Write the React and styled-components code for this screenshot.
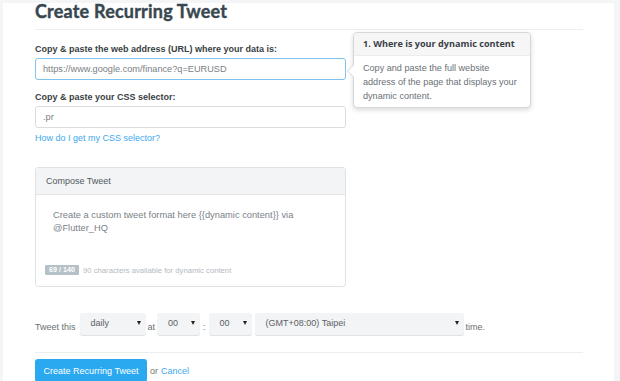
import React from "react";
import styled, { createGlobalStyle } from "styled-components";

const GlobalStyle = createGlobalStyle`
  html, body {
    margin: 0;
    padding: 0;
    background: #f3f5f7;
    font-family: "Liberation Sans", Arial, sans-serif;
    overflow: hidden;
  }
`;

const Panel = styled.div`
  margin: 3px 0 0 3px;
  width: 611px;
  height: 378px;
  background: #fff;
  padding: 0 31px 0 32px;
  box-sizing: border-box;
`;

const Title = styled.h1`
  margin: 0;
  font-family: Lato, "Open Sans", sans-serif;
  font-weight: 700;
  font-size: 18px;
  line-height: 17px;
  color: #38474f;
  letter-spacing: 0.2px;
  -webkit-text-stroke: 0.4px #38474f;
  padding-bottom: 9px;
  border-bottom: 1px solid #eceeef;
`;

const Form = styled.div`
  width: 311px;
  padding-top: 13px;
`;

const Field = styled.div`
  position: relative;
  margin-bottom: ${(p) => p.mb || 0}px;
`;

const Label = styled.div`
  font-size: 9px;
  font-weight: 700;
  color: #3a3f44;
  line-height: 12px;
  margin-bottom: 3px;
`;

const Input = styled.div`
  height: 22px;
  box-sizing: border-box;
  border: 1px solid ${(p) => (p.focused ? "#7cc3ee" : "#d9dde0")};
  border-radius: 3px;
  padding: 0 7px;
  font-size: 9.2px;
  line-height: 20px;
  color: #7a7f84;
`;

const Link = styled.a`
  display: ${(p) => (p.inline ? "inline" : "block")};
  margin-top: ${(p) => (p.inline ? 0 : 4)}px;
  color: #3ea8ee;
  font-size: 9px;
  text-decoration: none;
  line-height: 12px;
`;

const Popover = styled.div`
  position: absolute;
  left: 318px;
  top: -11px;
  width: 178px;
  background: #fff;
  border: 1px solid #d4d8db;
  border-radius: 4px;
  box-shadow: 0 2px 5px rgba(0, 0, 0, 0.15);
  box-sizing: border-box;
  z-index: 2;
  &::before,
  &::after {
    content: "";
    position: absolute;
    border-style: solid;
    border-color: transparent;
  }
  &::before {
    left: -7px;
    top: 31px;
    border-width: 7px 7px 7px 0;
    border-right-color: #cfd3d6;
  }
  &::after {
    left: -6px;
    top: 32px;
    border-width: 6px 6px 6px 0;
    border-right-color: #fff;
  }
`;

const PopTitle = styled.div`
  background: #f6f6f6;
  border-bottom: 1px solid #ececec;
  border-radius: 4px 4px 0 0;
  height: 23px;
  box-sizing: border-box;
  padding: 0 9px;
  font-family: "Open Sans", sans-serif;
  font-weight: 700;
  font-size: 9.1px;
  line-height: 22px;
  color: #3a4046;
`;

const PopBody = styled.div`
  padding: 5px 9px 4px;
  font-size: 9.1px;
  line-height: 14px;
  color: #6b7075;
`;

const Compose = styled.div`
  margin-top: 23px;
  border: 1px solid #e0e3e5;
  border-radius: 3px;
  height: 120px;
  box-sizing: border-box;
  display: flex;
  flex-direction: column;
`;

const ComposeHead = styled.div`
  background: #f2f4f5;
  border-bottom: 1px solid #e3e6e8;
  height: 27px;
  box-sizing: border-box;
  padding: 0 10px;
  font-size: 9px;
  line-height: 26px;
  color: #55595d;
`;

const ComposeBody = styled.div`
  flex: 1;
  padding: 14px 17px 0;
  font-size: 9.3px;
  line-height: 13px;
  color: #7b8187;
`;

const Counter = styled.div`
  display: flex;
  align-items: center;
  gap: 4px;
  padding: 0 9px 11px;
  font-size: 7.7px;
  color: #b3babf;
`;

const Badge = styled.span`
  background: #b5c1c8;
  color: #fff;
  font-weight: 700;
  font-size: 7.2px;
  width: 34px;
  height: 10px;
  line-height: 10px;
  text-align: center;
  border-radius: 1px;
`;

const Schedule = styled.div`
  display: flex;
  align-items: center;
  margin-top: 26px;
  height: 22px;
  font-size: 9px;
  color: #6b7075;
`;

const Word = styled.span`
  padding: 5px ${(p) => p.px ?? 2}px 0;
`;

const Select = styled.div`
  width: ${(p) => p.w}px;
  height: 22px;
  box-sizing: border-box;
  background: #f2f4f5;
  border-radius: 3px;
  box-shadow: 0 1px 0 #dfe3e6;
  display: flex;
  align-items: center;
  justify-content: space-between;
  margin-right: ${(p) => p.mr || 0}px;
  padding: 0 5px 3px 11px;
  font-size: 9px;
  color: #5c6166;
  &::after {
    content: "";
    border-style: solid;
    border-width: 4px 2.5px 0 2.5px;
    border-color: #222 transparent transparent transparent;
    margin-top: 1px;
  }
`;

const Divider = styled.div`
  margin-top: 17px;
  border-top: 1px solid #eceeef;
  width: 548px;
`;

const Actions = styled.div`
  display: flex;
  align-items: center;
  gap: 3px;
  margin-top: 6px;
  font-size: 9px;
  color: #777;
`;

const Button = styled.button`
  background: #2aa9f0;
  border: none;
  border-radius: 3px;
  color: #fff;
  font-family: "Liberation Sans", Arial, sans-serif;
  font-size: 9px;
  height: 23px;
  width: 112px;
  padding: 0;
`;

export default function App() {
  return (
    <>
      <GlobalStyle />
      <Panel>
        <Title>Create Recurring Tweet</Title>
        <Form>
          <Field mb={11}>
            <Label>Copy &amp; paste the web address (URL) where your data is:</Label>
            <Input focused>https://www.google.com/finance?q=EURUSD</Input>
            <Popover>
              <PopTitle>1. Where is your dynamic content</PopTitle>
              <PopBody>
                Copy and paste the full website address of the page that displays your dynamic content.
              </PopBody>
            </Popover>
          </Field>
          <Field>
            <Label>Copy &amp; paste your CSS selector:</Label>
            <Input>.pr</Input>
            <Link href="#">How do I get my CSS selector?</Link>
          </Field>
          <Compose>
            <ComposeHead>Compose Tweet</ComposeHead>
            <ComposeBody>
              Create a custom tweet format here {"{{dynamic content}}"} via
              <br />
              @Flutter_HQ
            </ComposeBody>
            <Counter>
              <Badge>69 / 140</Badge>
              90 characters available for dynamic content
            </Counter>
          </Compose>
        </Form>
        <Schedule>
          <Word px={0}>Tweet this</Word>
          <Word px={2} />
          <Select w={66}>daily</Select>
          <Word>at</Word>
          <Select w={43}>00</Select>
          <Word px={3}>:</Word>
          <Select w={43} mr={3}>00</Select>
          <Select w={209}>(GMT+08:00) Taipei</Select>
          <Word>time.</Word>
        </Schedule>
        <Divider />
        <Actions>
          <Button>Create Recurring Tweet</Button>
          <span>or</span>
          <Link href="#" inline="true">Cancel</Link>
        </Actions>
      </Panel>
    </>
  );
}
